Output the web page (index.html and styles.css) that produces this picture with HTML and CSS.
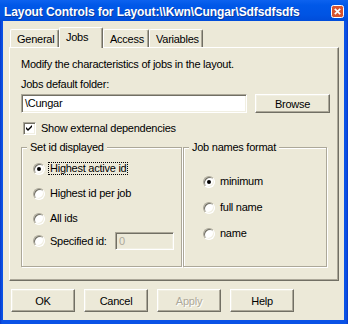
FILE: index.html
```html
<!DOCTYPE html>
<html>
<head>
<meta charset="utf-8">
<link rel="stylesheet" href="styles.css">
</head>
<body>
<div class="window">
  <div class="titlebar">
    <span class="title">Layout Controls for Layout:\\Kwn\Cungar\Sdfsdfsdfs</span>
    <span class="close">
      <svg width="13" height="13" viewBox="0 0 13 13">
        <rect x="0.5" y="0.5" width="12" height="12" rx="2" fill="#D8542F" stroke="#FFFFFF"/>
        <path d="M3.8 3.8 L9.2 9.2 M9.2 3.8 L3.8 9.2" stroke="#FFFFFF" stroke-width="1.7"/>
      </svg>
    </span>
  </div>
  <div class="frame">
    <div class="client">
      <div class="tabs">
        <div class="tab t-general">General</div>
        <div class="tab t-jobs active">Jobs</div>
        <div class="tab t-access">Access</div>
        <div class="tab t-vars">Variables</div>
      </div>
      <div class="panel">
        <div class="line">Modify the characteristics of jobs in the layout.</div>
        <div class="line l2">Jobs default folder:</div>
        <div class="folder-row">
          <div class="edit folder">\Cungar</div>
          <div class="btn browse">Browse</div>
        </div>
        <div class="check-row">
          <span class="check">
            <svg width="9" height="9" viewBox="0 0 9 9"><path d="M1 3 L1 5 L3 7 L7 3 L7 1 L3 5 Z" fill="#000"/></svg>
          </span>
          <span class="line">Show external dependencies</span>
        </div>
        <div class="groups">
          <fieldset class="group g-left">
            <legend>Set id displayed</legend>
            <div class="group-body">
              <div class="opt"><span class="radio on"></span><span class="lbl focus">Highest active id</span></div>
              <div class="opt"><span class="radio"></span><span class="lbl">Highest id per job</span></div>
              <div class="opt"><span class="radio"></span><span class="lbl">All ids</span></div>
              <div class="opt spec"><span class="radio"></span><span class="lbl">Specified id:</span><span class="edit dis">0</span></div>
            </div>
          </fieldset>
          <fieldset class="group g-right">
            <legend>Job names format</legend>
            <div class="group-body">
              <div class="opt"><span class="radio on"></span><span class="lbl">minimum</span></div>
              <div class="opt"><span class="radio"></span><span class="lbl">full name</span></div>
              <div class="opt"><span class="radio"></span><span class="lbl">name</span></div>
            </div>
          </fieldset>
        </div>
      </div>
      <div class="buttons">
        <div class="btn b">OK</div>
        <div class="btn b">Cancel</div>
        <div class="btn b disabled">Apply</div>
        <div class="btn b">Help</div>
      </div>
    </div>
  </div>
</div>
</body>
</html>
```
FILE: styles.css
```css
* { box-sizing: border-box; }
body {
  margin: 0;
  font-family: "Liberation Sans", Arial, sans-serif;
  font-size: 11px;
  letter-spacing: -0.25px;
  color: #000;
  background: #ECE9D8;
}
.window {
  width: 348px;
  height: 324px;
  display: flex;
  flex-direction: column;
  background: #0A4ADB;
}
.titlebar {
  height: 21px;
  flex: none;
  display: flex;
  align-items: flex-start;
  padding: 5px 4px 0 4px;
  background: linear-gradient(to bottom, #0C62EF 0%, #0058E8 25%, #0054E3 70%, #004CDA 100%);
}
.title {
  color: #fff;
  font-weight: bold;
  font-size: 12px;
  line-height: 14px;
  letter-spacing: -0.1px;
  white-space: nowrap;
  text-shadow: 1px 1px 0 #0A3A9E;
}
.close {
  margin-left: auto;
  width: 13px;
  height: 13px;
  display: flex;
}
.frame {
  flex: 1;
  display: flex;
  padding: 0 4px 4px 3px;
  background: linear-gradient(to right, #0838C8 0, #0A52E6 2px, #0A52E6 calc(100% - 2px), #0838C8 100%);
}
.client {
  flex: 1;
  background: #ECE9D8;
  display: flex;
  flex-direction: column;
  padding: 6px 0 0 6px;
}
.tabs {
  display: flex;
  align-items: flex-end;
  height: 20px;
  padding-left: 1px;
}
.tab {
  height: 18px;
  padding: 3px 0 0 6px;
  line-height: 13px;
  border: 1px solid;
  border-color: #fff #716F64 transparent #fff;
  border-bottom: none;
  box-shadow: inset -1px 0 0 #ACA899;
  border-radius: 2px 2px 0 0;
  white-space: nowrap;
  flex: none;
}
.tab.active {
  height: 21px;
  margin-bottom: -1px;
  position: relative;
  z-index: 1;
  background: #ECE9D8;
}
.t-general { width: 49px; }
.t-jobs { width: 44px; }
.t-access { width: 46px; }
.t-vars { width: 54px; }
.panel {
  width: 330px;
  height: 234px;
  flex: none;
  border: 1px solid;
  border-color: #fff #716F64 #716F64 #fff;
  box-shadow: inset -1px -1px 0 #ACA899;
  padding: 10px 0 0 11px;
  display: flex;
  flex-direction: column;
  align-items: flex-start;
}
.line { line-height: 13px; white-space: nowrap; }
.l2 { margin-top: 7px; }
.folder-row {
  display: flex;
  gap: 8px;
  margin-top: 3px;
}
.edit {
  background: #fff;
  border: 1px solid;
  border-color: #ACA899 #fff #fff #ACA899;
  box-shadow: inset 1px 1px 0 #716F64, inset -1px -1px 0 #F1EFE2;
  white-space: nowrap;
}
.folder {
  width: 226px;
  height: 19px;
  padding-left: 3px;
  line-height: 15px;
  padding-top: 1px;
}
.btn {
  display: flex;
  align-items: center;
  justify-content: center;
  background: #ECE9D8;
  border: 1px solid;
  border-color: #fff #716F64 #716F64 #fff;
  box-shadow: inset -1px -1px 0 #ACA899, inset 1px 1px 0 #F1EFE2;
  flex: none;
}
.browse { width: 75px; height: 19px; }
.check-row {
  display: flex;
  align-items: center;
  height: 13px;
  margin-top: 9px;
  padding-left: 2px;
}
.check {
  width: 13px;
  height: 13px;
  flex: none;
  margin-right: 5px;
  background: #fff;
  border: 1px solid;
  border-color: #ACA899 #fff #fff #ACA899;
  box-shadow: inset 1px 1px 0 #716F64, inset -1px -1px 0 #F1EFE2;
  display: flex;
  align-items: center;
  justify-content: center;
}
.groups {
  display: flex;
  gap: 1px;
  margin-top: 6px;
}
.group {
  margin: 0;
  padding: 0;
  min-width: 0;
  height: 126px;
  border: 1px solid #ACA899;
  box-shadow: inset 1px 1px 0 #fff, 1px 1px 0 #fff;
}
.g-left { width: 161px; }
.g-right { width: 144px; }
.group legend {
  padding: 0 3px;
  margin-left: 5px;
  line-height: 13px;
  background: #ECE9D8;
}
.group-body {
  display: flex;
  flex-direction: column;
}
.g-left .group-body { padding: 8px 0 0 11px; gap: 12px; }
.g-right .group-body { padding: 21px 0 0 19px; gap: 13px; }
.opt {
  display: flex;
  align-items: center;
  height: 13px;
}
.radio {
  width: 12px;
  height: 12px;
  flex: none;
  margin-right: 3px;
  border-radius: 50%;
  background: #fff;
  border: 1px solid;
  border-color: #ACA899 #fff #fff #ACA899;
  box-shadow: inset 1px 1px 0 #716F64, inset -1px -1px 0 #F1EFE2;
  display: flex;
  align-items: center;
  justify-content: center;
}
.radio.on::after {
  content: "";
  width: 4px;
  height: 4px;
  border-radius: 50%;
  background: #000;
}
.lbl {
  border: 1px dotted transparent;
  padding: 0 1px;
  line-height: 11px;
  white-space: nowrap;
}
.lbl.focus { border-color: #000; }
.spec { height: 18px; margin-top: -5px; }
.spec .lbl { width: 67px; flex: none; }
.dis {
  width: 59px;
  height: 18px;
  background: #ECE9D8;
  color: #ACA899;
  padding-left: 3px;
  line-height: 16px;
}
.buttons {
  display: flex;
  gap: 9px;
  margin-top: 8px;
  padding-left: 2px;
}
.b { width: 64px; height: 23px; }
.disabled { color: #ACA899; text-shadow: 1px 1px 0 #fff; }
```
